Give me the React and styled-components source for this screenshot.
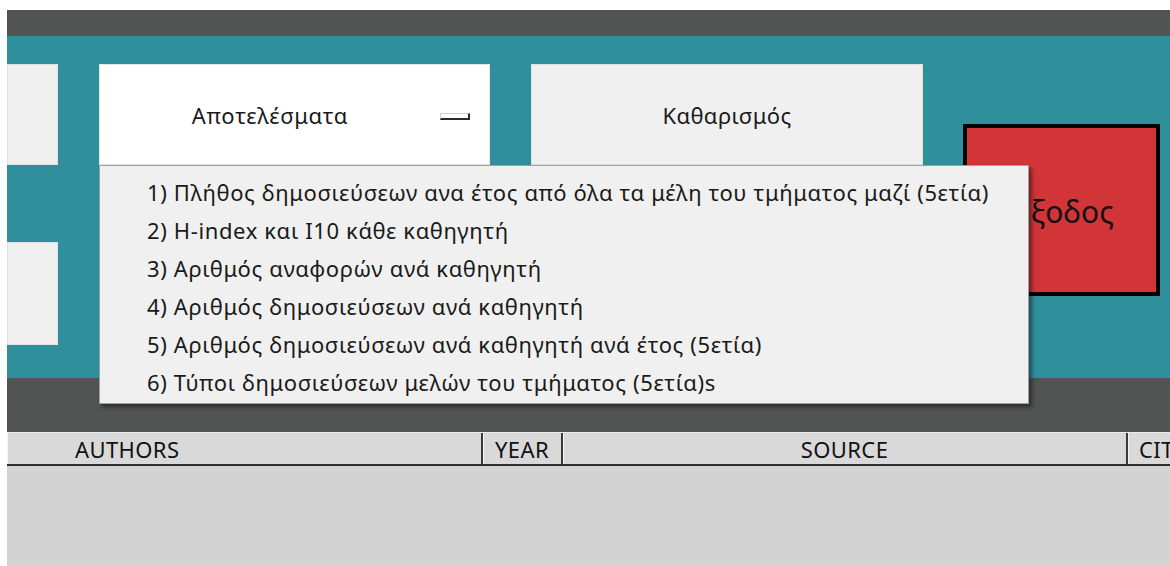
import React from "react";
import styled, { createGlobalStyle } from "styled-components";

const GlobalStyle = createGlobalStyle`
  html, body {
    margin: 0;
    padding: 0;
    background: #ffffff;
    overflow: hidden;
  }
  body {
    font-family: "Noto Sans", "Open Sans", sans-serif;
  }
`;

const reports = [
  "1) Πλήθος δημοσιεύσεων ανα έτος από όλα τα μέλη του τμήματος μαζί (5ετία)",
  "2) H-index και I10 κάθε καθηγητή",
  "3) Αριθμός αναφορών ανά καθηγητή",
  "4) Αριθμός δημοσιεύσεων ανά καθηγητή",
  "5) Αριθμός δημοσιεύσεων ανά καθηγητή ανά έτος (5ετία)",
  "6) Τύποι δημοσιεύσεων μελών του τμήματος (5ετία)s",
];

const columns = [
  { title: "AUTHORS", width: "476px", align: "left", pad: "68px" },
  { title: "YEAR", width: "80px", align: "center", pad: "0" },
  { title: "SOURCE", width: "565px", align: "center", pad: "0" },
  { title: "CITATIONS", width: "160px", align: "left", pad: "11px" },
];

const Window = styled.div`
  padding: 10px 0 0 7px;
  height: 556px;
  display: flex;
  flex-direction: column;
`;

const TitleBar = styled.div`
  height: 26px;
  background: #525453;
`;

const ControlPanel = styled.div`
  height: 342px;
  background: #2f8f9b;
  display: flex;
  align-items: flex-start;
  padding-top: 28px;
  box-sizing: border-box;
`;

const SideColumn = styled.div`
  display: flex;
  flex-direction: column;
  gap: 77px;
  width: 51px;
  margin-right: 41px;
`;

const PlainButton = styled.div`
  width: ${(p) => p.$width || "392px"};
  height: ${(p) => p.$height || "101px"};
  background: #f0f0f0;
  border: 1px solid #e1e1e1;
  box-sizing: border-box;
  display: flex;
  align-items: center;
  justify-content: center;
  font-size: 22px;
  letter-spacing: 0.4px;
  color: #1a1a1a;
  margin-right: ${(p) => p.$gap || "0"};
`;

const ComboWrap = styled.div`
  position: relative;
  width: 391px;
  height: 101px;
  margin-right: 41px;
`;

const ComboBox = styled.div`
  height: 100%;
  background: #ffffff;
  border: 1px solid #e6e6e6;
  box-sizing: border-box;
  display: flex;
  align-items: center;
  font-size: 22px;
  letter-spacing: 0.7px;
  color: #1a1a1a;
`;

const ComboLabel = styled.span`
  flex: 1;
  text-align: center;
`;

const ComboArrow = styled.span`
  width: 27px;
  height: 4px;
  margin-right: 19px;
  margin-top: 4px;
  background: #ffffff;
  border-top: 1px solid #cfcfcf;
  border-left: 1px solid #cfcfcf;
  border-bottom: 2px solid #2b2b2b;
  border-right: 2px solid #2b2b2b;
`;

const DropList = styled.ul`
  position: absolute;
  top: 101px;
  left: 0;
  z-index: 5;
  width: 930px;
  height: 239px;
  margin: 0;
  padding: 7px 0 0 47px;
  box-sizing: border-box;
  list-style: none;
  background: #f0f0f0;
  border: 1px solid #a0a0a0;
  box-shadow: 3px 3px 4px rgba(0, 0, 0, 0.45);
`;

const DropItem = styled.li`
  height: 38px;
  display: flex;
  align-items: center;
  font-size: 22px;
  letter-spacing: 0.62px;
  color: #1a1a1a;
  white-space: nowrap;
`;

const ExitButton = styled.div`
  width: 197px;
  height: 172px;
  margin-top: 60px;
  background: #d13538;
  border: 4px solid #000000;
  box-sizing: border-box;
  display: flex;
  align-items: center;
  justify-content: center;
  padding-top: 2px;
  font-size: 30px;
  color: #111111;
`;

const Divider = styled.div`
  height: 54px;
  background: #525453;
`;

const TableHead = styled.div`
  display: flex;
  height: 34px;
  background: #d9d9d9;
  border-top: 1px solid #ececec;
  border-bottom: 2px solid #2e2e2e;
  box-sizing: border-box;
  overflow: hidden;
`;

const HeadCell = styled.div`
  flex: 0 0 ${(p) => p.$width};
  box-sizing: border-box;
  display: flex;
  align-items: center;
  justify-content: ${(p) => (p.$align === "center" ? "center" : "flex-start")};
  padding-left: ${(p) => p.$pad};
  font-size: 22px;
  letter-spacing: 0.4px;
  color: #111111;
  border-right: 2px solid #3a3a3a;
  box-shadow: inset 1px 0 0 #f4f4f4;
  white-space: nowrap;
`;

const TableBody = styled.div`
  flex: 1;
  background: #d3d3d3;
`;

export default function App() {
  return (
    <>
      <GlobalStyle />
      <Window>
        <TitleBar />
        <ControlPanel>
          <SideColumn>
            <PlainButton $width="51px" />
            <PlainButton $width="51px" $height="103px" />
          </SideColumn>
          <ComboWrap>
            <ComboBox>
              <ComboLabel>Αποτελέσματα</ComboLabel>
              <ComboArrow />
            </ComboBox>
            <DropList>
              {reports.map((r) => (
                <DropItem key={r}>{r}</DropItem>
              ))}
            </DropList>
          </ComboWrap>
          <PlainButton $gap="40px">Καθαρισμός</PlainButton>
          <ExitButton>Έξοδος</ExitButton>
        </ControlPanel>
        <Divider />
        <TableHead>
          {columns.map((c) => (
            <HeadCell key={c.title} $width={c.width} $align={c.align} $pad={c.pad}>
              {c.title}
            </HeadCell>
          ))}
        </TableHead>
        <TableBody />
      </Window>
    </>
  );
}
